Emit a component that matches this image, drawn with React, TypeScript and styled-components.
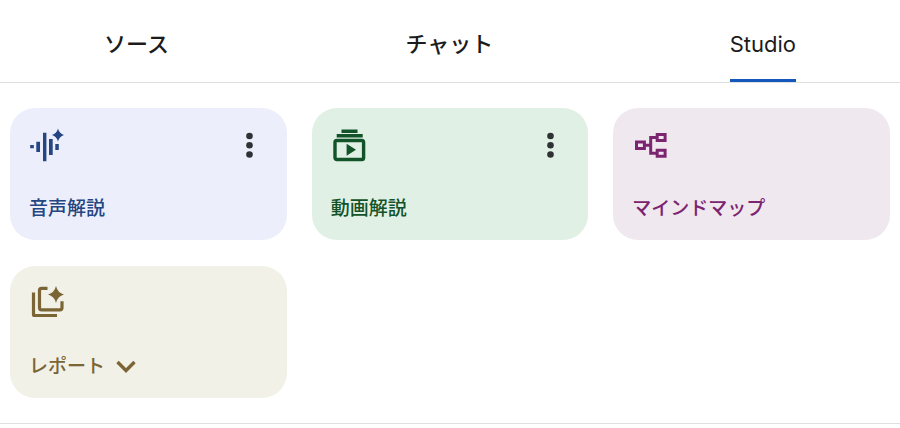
import React from "react";
import styled, { createGlobalStyle } from "styled-components";

const GlobalStyle = createGlobalStyle`
  *, *::before, *::after { box-sizing: border-box; }
  body {
    margin: 0;
    background: #ffffff;
    color: #1b1b1c;
    font-family: Inter, "Noto Sans CJK JP", sans-serif;
  }
`;

const TabList = styled.div`
  display: flex;
  justify-content: space-between;
  padding: 0 104px;
  border-bottom: 1px solid #dedfe1;
`;

const Tab = styled.button<{ $active?: boolean; $latin?: boolean }>`
  height: 82px;
  padding: 9px 0 0;
  border: 0;
  border-bottom: 3px solid ${(p) => (p.$active ? "#1558bc" : "transparent")};
  background: none;
  color: inherit;
  font: inherit;
  font-size: 22px;
  font-weight: ${(p) => (p.$latin ? 400 : 500)};
  line-height: 32px;
  cursor: pointer;
`;

const CardGrid = styled.main`
  display: grid;
  grid-template-columns: repeat(3, 1fr);
  gap: 26px 25px;
  padding: 25px 10px;
  border-bottom: 1px solid #dedfe1;
`;

const Card = styled.article<{ $background: string; $color: string }>`
  display: flex;
  flex-direction: column;
  justify-content: space-between;
  min-height: 132px;
  padding: 18px 19px 16px;
  border-radius: 25px;
  background: ${(p) => p.$background};
  color: ${(p) => p.$color};
`;

const CardTop = styled.div`
  display: flex;
  justify-content: space-between;
  align-items: center;
`;

const Icon = styled.svg`
  display: block;
  width: 38px;
  height: 38px;
  fill: currentColor;
`;

const MenuButton = styled.button`
  padding: 0;
  border: 0;
  background: none;
  color: #303134;
  cursor: pointer;
`;

const CardLabel = styled.button`
  display: flex;
  align-items: center;
  gap: 11px;
  padding: 0;
  border: 0;
  background: none;
  color: inherit;
  font: inherit;
  font-size: 19px;
  font-weight: 500;
  line-height: 30px;
  cursor: pointer;
`;

const Chevron = styled.svg`
  width: 20px;
  height: 14px;
  fill: none;
  stroke: currentColor;
  stroke-width: 3.4;
`;

const AudioIcon = () => (
  <Icon viewBox="0 0 38 38" aria-hidden="true">
    <path d="M1.200 19h3.600v3.200H1.200zM7.300 15.700h3.700v10.300H7.300zM14 6.700h3.400v28.600H14zM20 13h3.700v16H20zM26.300 18h3.500v6h-3.500z" />
    <path d="M29 2.500q1.200 5.200 6 6.500-4.800 1.300-6 6.500-1.200-5.200-6-6.500 4.800-1.300 6-6.500z" />
    <path d="M29 4.500L33.200 9 29 13.500 24.800 9z" />
  </Icon>
);

const VideoIcon = () => (
  <Icon viewBox="0 0 38 38" aria-hidden="true">
    <path d="M10.500 3.500h16v3.400h-16zM5.700 8.100h26v3.400h-26zM15.600 17.800v12l9.400-6z" />
    <rect x="4" y="14.500" width="28.600" height="19" rx="1.800" fill="none" stroke="currentColor" strokeWidth="3.400" />
  </Icon>
);

const MindMapIcon = () => (
  <Icon viewBox="0 0 38 38" aria-hidden="true">
    <path
      d="M4.500 16h7.900v6.500H4.500zM25.200 8.400h7.900v6H25.200zM25.200 24.300h7.900v6H25.200zM12.400 19.300h6M25.200 11.500h-6.500v15.800h6.500"
      fill="none"
      stroke="currentColor"
      strokeWidth="3"
    />
  </Icon>
);

const ReportIcon = () => (
  <Icon viewBox="0 0 38 38" aria-hidden="true">
    <path
      d="M4.500 8.500v22q0 1 1 1h22.500M18.500 4.300h-6q-2 0-2 2v17.500q0 2 2 2h18.500q2 0 2-2v-6.500"
      fill="none"
      stroke="currentColor"
      strokeWidth="3.200"
    />
    <path d="M27 2q1.600 6.800 8 8.500-6.400 1.700-8 8.500-1.600-6.800-8-8.500 6.400-1.700 8-8.500z" />
    <path d="M27 6L31.500 10.500 27 15 22.500 10.500z" />
  </Icon>
);

const MoreMenu = ({ label }: { label: string }) => (
  <MenuButton aria-label={label}>
    <Icon viewBox="0 0 38 38" aria-hidden="true">
      <circle cx="19.500" cy="10" r="3.300" />
      <circle cx="19.500" cy="19.200" r="3.300" />
      <circle cx="19.500" cy="28.500" r="3.300" />
    </Icon>
  </MenuButton>
);

export default function App() {
  return (
    <>
      <GlobalStyle />
      <TabList role="tablist">
        <Tab role="tab" aria-selected={false}>ソース</Tab>
        <Tab role="tab" aria-selected={false}>チャット</Tab>
        <Tab role="tab" aria-selected $active $latin>Studio</Tab>
      </TabList>
      <CardGrid>
        <Card $background="#eceffb" $color="#254583">
          <CardTop><AudioIcon /><MoreMenu label="音声解説のメニュー" /></CardTop>
          <CardLabel>音声解説</CardLabel>
        </Card>
        <Card $background="#e0f0e4" $color="#13532a">
          <CardTop><VideoIcon /><MoreMenu label="動画解説のメニュー" /></CardTop>
          <CardLabel>動画解説</CardLabel>
        </Card>
        <Card $background="#f0e8ef" $color="#7b246f">
          <CardTop><MindMapIcon /></CardTop>
          <CardLabel>マインドマップ</CardLabel>
        </Card>
        <Card $background="#f1f1e8" $color="#7b6535">
          <CardTop><ReportIcon /></CardTop>
          <CardLabel aria-haspopup="menu">
            レポート
            <Chevron viewBox="0 0 20 14" aria-hidden="true"><path d="M1.500 2L10 10.500 18.500 2" /></Chevron>
          </CardLabel>
        </Card>
      </CardGrid>
    </>
  );
}
